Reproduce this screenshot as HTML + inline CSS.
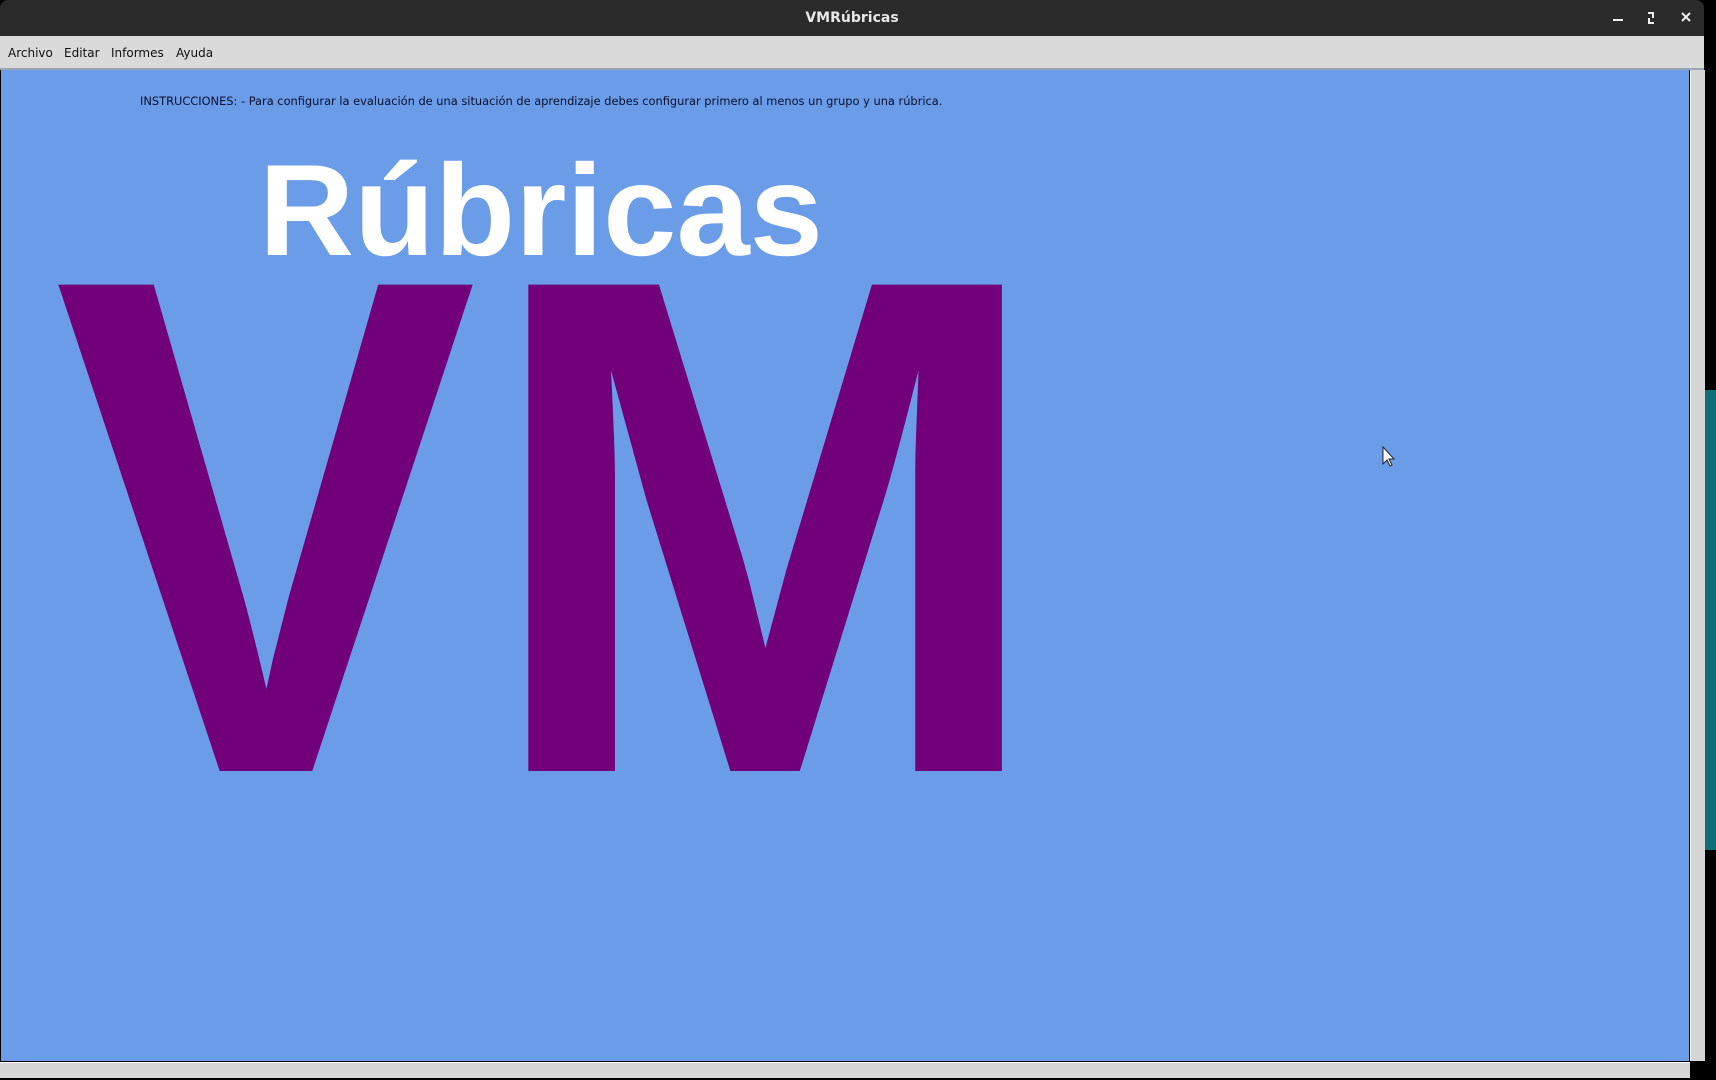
<!DOCTYPE html>
<html><head><meta charset="utf-8"><style>
html,body{margin:0;padding:0;width:1716px;height:1080px;overflow:hidden;background:#000;font-family:"DejaVu Sans","Liberation Sans",sans-serif}
.title{position:absolute;left:0;top:0;width:1704px;height:36px;background:#2b2b2b;color:#e8e8e8;font-weight:bold;font-size:14px;text-align:center;line-height:37px;border-radius:8px 8px 0 0}
.menu{position:absolute;left:0;top:36px;width:1704px;height:32px;background:#dadada;border-bottom:2px solid #9aa6b4;font-size:12px;line-height:35px;color:#111}
.menu span{position:absolute}
.main{position:absolute;left:1px;top:70px;width:1688px;height:991px;background:#6b9ce8}
.vs{position:absolute;left:1690px;top:70px;width:14px;height:991px;background:#d6d6d6;border-left:1px solid #fff}
.hs{position:absolute;left:0;top:1062px;width:1690px;height:15px;background:#d6d6d6;border-top:1px solid #fff}
.teal{position:absolute;left:1705px;top:390px;width:11px;height:460px;background:#0f6f78}
.ins{position:absolute;left:140px;top:94px;font-size:11.4px;color:#0a1030;white-space:nowrap}
</style></head><body>
<div class="title">VMRúbricas
<svg style="position:absolute;left:1600px;top:0" width="104" height="36">
<line x1="13" y1="20" x2="23" y2="20" stroke="#eee" stroke-width="2"/>
<path d="M48 13h5v5M54 23h-5v-5" stroke="#eee" stroke-width="2" fill="none"/>
<path d="M82 13l8 8M90 13l-8 8" stroke="#eee" stroke-width="2"/></svg></div>
<div class="menu"><span style="left:8px">Archivo</span><span style="left:64px">Editar</span><span style="left:111px">Informes</span><span style="left:176px">Ayuda</span></div>
<div class="main"></div>
<div class="ins">INSTRUCCIONES: - Para configurar la evaluación de una situación de aprendizaje debes configurar primero al menos un grupo y una rúbrica.</div>
<svg style="position:absolute;left:0;top:0" width="1716" height="1080">
<text x="259" y="255" font-family="Liberation Sans" font-weight="bold" font-size="130" fill="#fff" textLength="564" lengthAdjust="spacingAndGlyphs">Rúbricas</text>
<g transform="translate(54,0) scale(0.897,1)"><text x="0" y="771" font-family="Liberation Sans" font-weight="bold" font-size="707" fill="#72007a">V</text></g>
<g transform="translate(483,0) scale(0.958,1)"><text x="0" y="771" font-family="Liberation Sans" font-weight="bold" font-size="707" fill="#72007a">M</text></g>
<path d="M1383 447v17l4-4 3 6 2-1-3-6h5z" fill="#fff" stroke="#222" stroke-width="1"/>
</svg>
<div class="vs"></div><div class="hs"></div><div class="teal"></div>
</body></html>
